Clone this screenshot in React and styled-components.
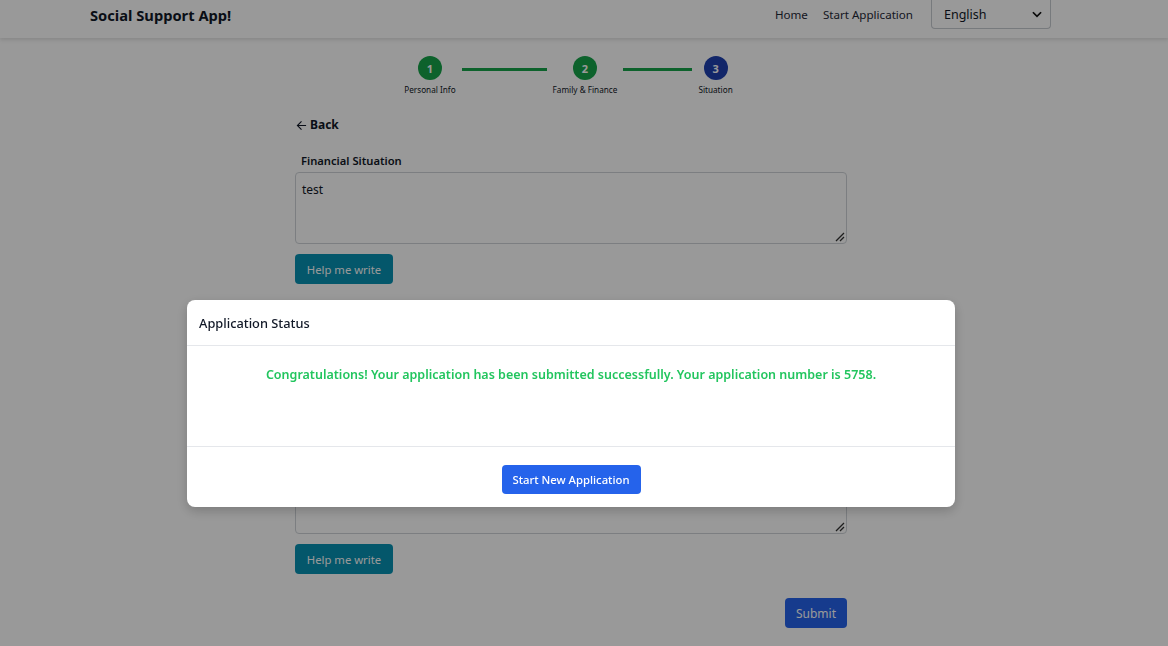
import React from 'react'
import styled, { createGlobalStyle } from 'styled-components'

const GlobalStyle = createGlobalStyle`
  body {
    margin: 0;
    background: #ffffff;
    font-family: "Noto Sans", "Open Sans", sans-serif;
    color: #111827;
  }
`

const Page = styled.div`
  min-height: 646px;
`

const Header = styled.header`
  height: 38px;
  box-sizing: border-box;
  padding: 0 117px 0 90px;
  display: flex;
  justify-content: space-between;
  align-items: flex-start;
  box-shadow: 0 2px 4px rgba(0, 0, 0, 0.12);
`

const Brand = styled.div`
  font-size: 14.7px;
  font-weight: 700;
  line-height: 30px;
  color: #111827;
`

const Nav = styled.nav`
  display: flex;
  align-items: flex-start;
`

const NavLink = styled.a`
  font-size: 11.6px;
  line-height: 30px;
  color: #1f2937;
  margin-right: ${p => p.gap || 10}px;
  text-decoration: none;
`

const LangSelect = styled.div`
  width: 120px;
  height: 29px;
  box-sizing: border-box;
  border: 1px solid #c7cbd1;
  border-top: none;
  border-radius: 0 0 4px 4px;
  display: flex;
  align-items: center;
  justify-content: space-between;
  padding: 0 6px 0 12px;
  font-size: 12.5px;
  color: #111827;
`

const Content = styled.div`
  padding-right: 26px;
`

const Main = styled.main`
  width: 552px;
  margin: 0 auto;
  padding-top: 18px;
`

const Stepper = styled.div`
  display: flex;
  justify-content: center;
  align-items: flex-start;
  margin-left: -5px;
`

const Step = styled.div`
  display: flex;
  flex-direction: column;
  align-items: center;
`

const Circle = styled.div`
  width: 24px;
  height: 24px;
  border-radius: 50%;
  background: ${p => (p.active ? '#1e40af' : '#16a34a')};
  color: #fff;
  font-size: 11px;
  font-weight: 700;
  display: flex;
  align-items: center;
  justify-content: center;
`

const StepLabel = styled.div`
  margin-top: 4px;
  font-size: 8.2px;
  line-height: 12px;
  color: #111827;
  white-space: nowrap;
`

const Connector = styled.div`
  width: ${p => p.width}px;
  height: 3px;
  margin: 12px 6px 0;
  background: #16a34a;
`

const BackLink = styled.div`
  display: flex;
  align-items: center;
  gap: 3px;
  margin-top: 20px;
  margin-left: 1px;
  font-size: 12px;
  font-weight: 700;
  line-height: 18px;
  color: #111827;
`

const Field = styled.div`
  margin-top: ${p => p.top}px;
`

const Label = styled.div`
  margin-left: 6px;
  font-size: 11.2px;
  font-weight: 600;
  line-height: 17px;
  color: #111827;
`

const TextArea = styled.div`
  position: relative;
  margin-top: 3px;
  height: 72px;
  box-sizing: border-box;
  border: 1px solid #cfd3d8;
  border-radius: 4px;
  padding: 8px 6px;
  font-size: 12px;
  color: #111827;
`

const Grip = styled.svg`
  position: absolute;
  right: 1px;
  bottom: 1px;
`

const HelpButton = styled.button`
  margin-top: 10px;
  width: 98px;
  height: 30px;
  border: none;
  border-radius: 4px;
  background: #0891b2;
  color: #ffffff;
  font-family: inherit;
  font-size: 11.3px;
  padding: 0;
`

const Actions = styled.div`
  display: flex;
  justify-content: flex-end;
  margin-top: 24px;
`

const SubmitButton = styled.button`
  width: 62px;
  height: 30px;
  border: none;
  border-radius: 4px;
  background: #2563eb;
  color: #ffffff;
  font-family: inherit;
  font-size: 12px;
  padding: 0;
`

const Overlay = styled.div`
  position: fixed;
  inset: 0;
  background: rgba(0, 0, 0, 0.4);
  display: flex;
  justify-content: center;
  align-items: flex-start;
  padding: 300px 26px 0 0;
`

const Modal = styled.div`
  width: 768px;
  background: #ffffff;
  border-radius: 8px;
  box-shadow: 0 4px 12px rgba(0, 0, 0, 0.2);
`

const ModalHeader = styled.div`
  height: 46px;
  box-sizing: border-box;
  padding: 0 12px;
  display: flex;
  align-items: center;
  border-bottom: 1px solid #e5e7eb;
  font-size: 12.8px;
  font-weight: 500;
  color: #111827;
`

const ModalBody = styled.div`
  height: 101px;
  box-sizing: border-box;
  padding-top: 19px;
  text-align: center;
  border-bottom: 1px solid #e5e7eb;
`

const Success = styled.p`
  margin: 0;
  font-size: 12.5px;
  font-weight: 600;
  line-height: 20px;
  color: #22c55e;
`

const ModalFooter = styled.div`
  height: 60px;
  box-sizing: border-box;
  padding-top: 18px;
  display: flex;
  align-items: flex-start;
  justify-content: center;
`

const PrimaryButton = styled.button`
  width: 139px;
  height: 29px;
  border: none;
  border-radius: 4px;
  background: #2563eb;
  color: #ffffff;
  font-family: inherit;
  font-size: 11.3px;
  font-weight: 500;
  padding: 0;
`

const steps = [
  { n: 1, label: 'Personal Info' },
  { n: 2, label: 'Family & Finance' },
  { n: 3, label: 'Situation', active: true },
]

const fields = [
  { label: 'Financial Situation', value: 'test', top: 18 },
  { label: 'Employment Circumstances', value: '', top: 13 },
  { label: 'Reason for Applying', value: '', top: 13 },
]

function ResizeGrip() {
  return (
    <Grip width="10" height="10" viewBox="0 0 10 10">
      <path d="M9 1 L1 9 M9 5 L5 9" stroke="#333" strokeWidth="1.3" fill="none" />
    </Grip>
  )
}

export default function App() {
  return (
    <Page>
      <GlobalStyle />
      <Header>
        <Brand>Social Support App!</Brand>
        <Nav>
          <NavLink gap={15}>Home</NavLink>
          <NavLink gap={18}>Start Application</NavLink>
          <LangSelect>
            English
            <svg width="14" height="14" viewBox="0 0 24 24">
              <path d="M5 9 L12 16 L19 9" stroke="#111" strokeWidth="3" fill="none" />
            </svg>
          </LangSelect>
        </Nav>
      </Header>

      <Content>
        <Main>
          <Stepper>
            {steps.map((s, i) => (
              <React.Fragment key={s.n}>
                {i > 0 && <Connector width={i === 1 ? 85 : 69} />}
                <Step>
                  <Circle active={s.active}>{s.n}</Circle>
                  <StepLabel>{s.label}</StepLabel>
                </Step>
              </React.Fragment>
            ))}
          </Stepper>

          <BackLink>
            <svg width="11" height="11" viewBox="0 0 12 12">
              <path d="M11 6 H1.5 M6 1.5 L1.5 6 L6 10.5" stroke="#111827" strokeWidth="1.2" fill="none" />
            </svg>
            Back
          </BackLink>

          {fields.map(f => (
            <Field key={f.label} top={f.top}>
              <Label>{f.label}</Label>
              <TextArea>
                {f.value}
                <ResizeGrip />
              </TextArea>
              <HelpButton>Help me write</HelpButton>
            </Field>
          ))}

          <Actions>
            <SubmitButton>Submit</SubmitButton>
          </Actions>
        </Main>
      </Content>

      <Overlay>
        <Modal>
          <ModalHeader>Application Status</ModalHeader>
          <ModalBody>
            <Success>
              Congratulations! Your application has been submitted successfully. Your application number is 5758.
            </Success>
          </ModalBody>
          <ModalFooter>
            <PrimaryButton>Start New Application</PrimaryButton>
          </ModalFooter>
        </Modal>
      </Overlay>
    </Page>
  )
}
